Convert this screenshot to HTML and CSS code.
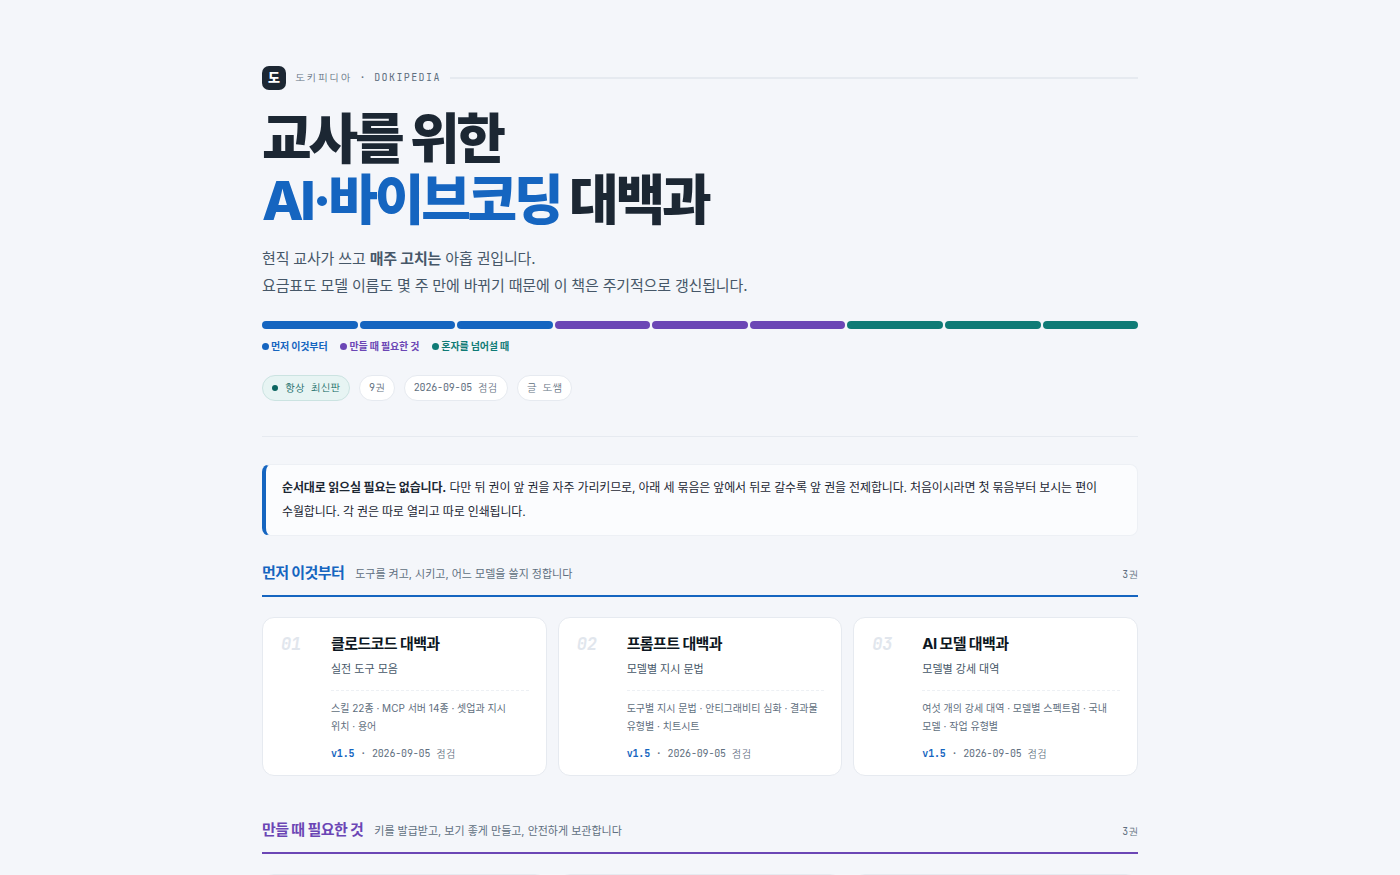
FILE: index.html
```
<!DOCTYPE html>
<html lang="ko">
<head>
<meta charset="utf-8">
<meta name="viewport" content="width=device-width, initial-scale=1">
<title>교사를 위한 AI·바이브코딩 대백과</title>
<link rel="stylesheet" href="styles.css">
</head>
<body>
<div class="page">
  <header class="hero">
    <div class="brand">
      <span class="brand-mark">도</span>
      <span class="brand-name">도키피디아 · DOKIPEDIA</span>
      <span class="brand-line"></span>
    </div>
    <h1 class="title">교사를 위한<br><span class="title-accent">AI·바이브코딩</span> 대백과</h1>
    <p class="lede">현직 교사가 쓰고 <b>매주 고치는</b> 아홉 권입니다.<br>요금표도 모델 이름도 몇 주 만에 바뀌기 때문에 이 책은 주기적으로 갱신됩니다.</p>
    <div class="spectrum">
      <span class="bar blue"></span><span class="bar blue"></span><span class="bar blue"></span>
      <span class="bar purple"></span><span class="bar purple"></span><span class="bar purple"></span>
      <span class="bar teal"></span><span class="bar teal"></span><span class="bar teal"></span>
    </div>
    <ul class="legend">
      <li class="blue">먼저 이것부터</li>
      <li class="purple">만들 때 필요한 것</li>
      <li class="teal">혼자를 넘어설 때</li>
    </ul>
    <ul class="chips">
      <li class="chip live">항상 최신판</li>
      <li class="chip">9권</li>
      <li class="chip">2026-09-05 점검</li>
      <li class="chip">글 도쌤</li>
    </ul>
  </header>

  <p class="note"><b>순서대로 읽으실 필요는 없습니다.</b> 다만 뒤 권이 앞 권을 자주 가리키므로, 아래 세 묶음은 앞에서 뒤로 갈수록 앞 권을 전제합니다. 처음이시라면 첫 묶음부터 보시는 편이 수월합니다. 각 권은 따로 열리고 따로 인쇄됩니다.</p>

  <section class="group blue">
    <div class="group-head">
      <h2>먼저 이것부터</h2>
      <p>도구를 켜고, 시키고, 어느 모델을 쓸지 정합니다</p>
      <span class="count">3권</span>
    </div>
    <div class="cards">
      <a class="card" href="#01">
        <span class="num">01</span>
        <div class="card-body">
          <h3>클로드코드 대백과</h3>
          <p class="sub">실전 도구 모음</p>
          <p class="desc">스킬 22종 · MCP 서버 14종 · 셋업과 지시 위치 · 용어</p>
          <p class="meta"><b>v1.5</b> · 2026-09-05 점검</p>
        </div>
      </a>
      <a class="card" href="#02">
        <span class="num">02</span>
        <div class="card-body">
          <h3>프롬프트 대백과</h3>
          <p class="sub">모델별 지시 문법</p>
          <p class="desc">도구별 지시 문법 · 안티그래비티 심화 · 결과물 유형별 · 치트시트</p>
          <p class="meta"><b>v1.5</b> · 2026-09-05 점검</p>
        </div>
      </a>
      <a class="card" href="#03">
        <span class="num">03</span>
        <div class="card-body">
          <h3>AI 모델 대백과</h3>
          <p class="sub">모델별 강세 대역</p>
          <p class="desc">여섯 개의 강세 대역 · 모델별 스펙트럼 · 국내 모델 · 작업 유형별</p>
          <p class="meta"><b>v1.5</b> · 2026-09-05 점검</p>
        </div>
      </a>
    </div>
  </section>

  <section class="group purple">
    <div class="group-head">
      <h2>만들 때 필요한 것</h2>
      <p>키를 발급받고, 보기 좋게 만들고, 안전하게 보관합니다</p>
      <span class="count">3권</span>
    </div>
    <div class="cards">
      <a class="card" href="#04"></a>
      <a class="card" href="#05"></a>
      <a class="card" href="#06"></a>
    </div>
  </section>
</div>
</body>
</html>
```
FILE: styles.css
```
:root {
  --bg: #f4f6fa;
  --ink: #1c2733;
  --text: #465768;
  --muted: #5f6f80;
  --line: #e6eaf0;
  --blue: #1565c0;
  --purple: #6b46b5;
  --teal: #0f7b76;
  --sans: "Inter", "Noto Sans CJK KR", sans-serif;
  --mono: "JetBrains Mono", "NanumGothicCoding", monospace;
}

* { box-sizing: border-box; }

body {
  margin: 0;
  background: var(--bg);
  color: var(--ink);
  font-family: var(--sans);
  letter-spacing: -0.01em;
  word-break: keep-all;
}

h1, h2, h3, p, ul { margin: 0; padding: 0; }
ul { list-style: none; }

.blue { --tone: var(--blue); }
.purple { --tone: var(--purple); }
.teal { --tone: var(--teal); }

.page {
  max-width: 940px;
  margin: 0 auto;
  padding: 66px 32px 0;
}

.hero {
  padding-bottom: 35px;
  border-bottom: 1px solid var(--line);
}

.brand {
  display: flex;
  align-items: center;
  gap: 9px;
}
.brand-mark {
  width: 24px;
  height: 24px;
  border-radius: 7px;
  background: var(--ink);
  color: #fff;
  font-size: 13px;
  font-weight: 900;
  line-height: 23px;
  text-align: center;
}
.brand-name {
  font: 10px/16px var(--mono);
  letter-spacing: 0.14em;
  color: var(--muted);
}
.brand-line {
  flex: 1;
  height: 2px;
  background: var(--line);
}

.title {
  margin-top: 19px;
  font-size: 54px;
  font-weight: 800;
  line-height: 61px;
  letter-spacing: -0.06em;
}
.title-accent { color: var(--blue); }

.lede {
  margin-top: 14px;
  font-size: 15px;
  line-height: 27px;
  color: var(--text);
}

.spectrum {
  display: flex;
  gap: 2px;
  margin-top: 22px;
}
.bar {
  flex: 1;
  height: 8px;
  border-radius: 4px;
  background: var(--tone);
}

.legend {
  display: flex;
  gap: 13px;
  margin-top: 9px;
}
.legend li {
  display: flex;
  align-items: center;
  gap: 2px;
  font-size: 10px;
  font-weight: 700;
  line-height: 16px;
  color: var(--tone);
}
.legend li::before {
  content: "";
  width: 7px;
  height: 7px;
  border-radius: 50%;
  background: var(--tone);
}

.chips {
  display: flex;
  flex-wrap: wrap;
  gap: 9px;
  margin-top: 21px;
}
.chip {
  padding: 4px 9px;
  border: 1px solid var(--line);
  border-radius: 13px;
  background: #fff;
  font: 10px/16px var(--mono);
  color: var(--muted);
}
.live {
  display: flex;
  align-items: center;
  gap: 7px;
  border-color: #cbe3e1;
  background: #e7f4f3;
  color: #0b6560;
}
.live::before {
  content: "";
  width: 6px;
  height: 6px;
  border-radius: 50%;
  background: currentColor;
}

.note {
  margin-top: 27px;
  padding: 11px 18px 11px 16px;
  border: 1px solid #edf0f5;
  border-left: 4px solid var(--blue);
  border-radius: 8px;
  background: #fbfcfe;
  font-size: 12px;
  line-height: 24px;
}

.group { padding-top: 24px; }
.group + .group { padding-top: 41px; }

.group-head {
  display: flex;
  align-items: baseline;
  gap: 11px;
  padding-bottom: 9px;
  border-bottom: 2px solid var(--tone);
}
.group-head h2 {
  font-size: 15px;
  font-weight: 700;
  line-height: 26px;
  letter-spacing: -0.04em;
  color: var(--tone);
}
.group-head p {
  font-size: 11px;
  letter-spacing: 0;
  color: var(--muted);
}
.count {
  margin-left: auto;
  font: 10px/16px var(--mono);
  color: var(--muted);
}

.cards {
  display: grid;
  grid-template-columns: repeat(3, 1fr);
  gap: 11px;
  padding-top: 20px;
}
.card {
  display: grid;
  grid-template-columns: 50px 1fr;
  min-height: 159px;
  padding: 13px 17px 13px 18px;
  border: 1px solid var(--line);
  border-radius: 12px;
  background: #fff;
  color: inherit;
  text-decoration: none;
}
.num {
  font: italic 700 17px/26px var(--mono);
  color: #e1e6ed;
}
.card h3 {
  font-size: 15px;
  font-weight: 700;
  line-height: 26px;
  letter-spacing: -0.04em;
  color: #0d1722;
}
.sub {
  font-size: 11px;
  line-height: 24px;
  letter-spacing: 0;
  color: var(--text);
}
.desc {
  margin-top: 9px;
  padding: 8px 4px 0 0;
  border-top: 1px dashed #edf0f4;
  font-size: 10px;
  line-height: 18px;
  letter-spacing: 0;
  color: var(--muted);
}
.meta {
  margin-top: 11px;
  font: 10px/16px var(--mono);
  color: var(--muted);
}
.meta b { color: var(--blue); }
```
